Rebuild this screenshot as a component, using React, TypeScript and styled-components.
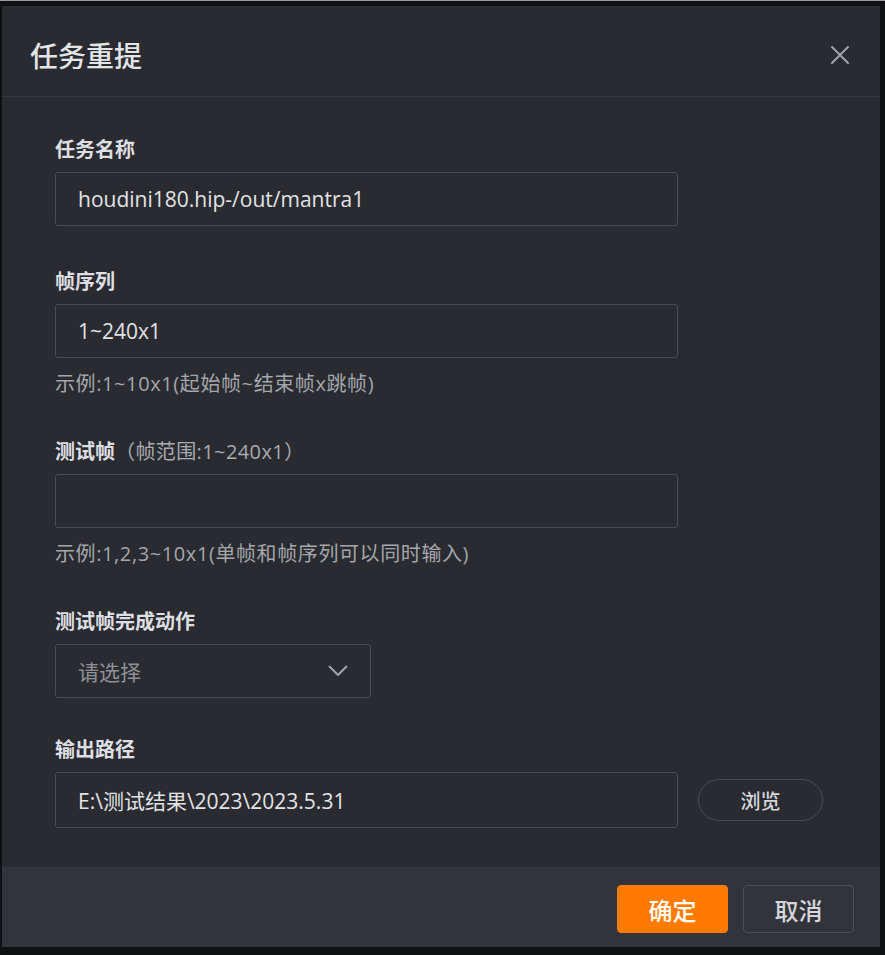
import React from 'react';
import styled, { createGlobalStyle } from 'styled-components';

const GlobalStyle = createGlobalStyle`
  html, body {
    margin: 0;
    padding: 0;
    background: #0f1012;
  }
  body {
    font-family: "Open Sans", "Noto Sans CJK SC", "Liberation Sans", sans-serif;
  }
`;

const Page = styled.div`
  width: 885px;
  height: 955px;
  box-sizing: border-box;
  border-top: 1px solid #9a9a9e;
  padding: 5px 5px 8px 2px;
  background: #0f1012;
`;

const Dialog = styled.div`
  height: 100%;
  display: flex;
  flex-direction: column;
  background: #2a2b31;
  color: #dcdde0;
`;

const Header = styled.div`
  height: 91px;
  box-sizing: border-box;
  display: flex;
  align-items: center;
  justify-content: space-between;
  padding: 8px 28px 0 28px;
  border-bottom: 1px solid #37383e;
`;

const Title = styled.h1`
  margin: 0;
  font-size: 28px;
  font-weight: 500;
  color: #e4e5e8;
`;

const CloseButton = styled.button`
  width: 24px;
  height: 24px;
  padding: 0;
  border: none;
  background: none;
  display: flex;
  align-items: center;
  justify-content: center;
  color: #a2a4ab;
  cursor: pointer;
`;

const Body = styled.div`
  flex: 1;
  padding: 41px 26px 0 53px;
  display: flex;
  flex-direction: column;
  gap: 44px;
`;

const Field = styled.div<{ $pullUp?: number }>`
  display: flex;
  flex-direction: column;
  margin-top: ${p => (p.$pullUp ? -p.$pullUp : 0)}px;
`;

const Label = styled.div`
  font-size: 20px;
  line-height: 24px;
  font-weight: 600;
  color: #dedfe2;
  margin-bottom: 10px;
`;

const LabelNote = styled.span`
  font-weight: 400;
  color: #a9abb1;
  letter-spacing: 0.4px;
`;

const Row = styled.div`
  display: flex;
  align-items: center;
  gap: 20px;
`;

const Input = styled.div<{ $width?: number; $height?: number; $placeholder?: boolean }>`
  width: ${p => p.$width ?? 623}px;
  height: ${p => p.$height ?? 54}px;
  box-sizing: border-box;
  border: 1px solid #4a4b51;
  border-radius: 3px;
  padding: 0 22px;
  display: flex;
  align-items: center;
  justify-content: space-between;
  font-size: 21px;
  color: ${p => (p.$placeholder ? '#8f9197' : '#e2e3e6')};
`;

const Hint = styled.div`
  margin-top: 14px;
  font-size: 20px;
  line-height: 24px;
  letter-spacing: 0.6px;
  color: #a4a6ac;
`;

const BrowseButton = styled.button`
  width: 125px;
  height: 42px;
  border: 1px solid #4a4b51;
  border-radius: 21px;
  background: transparent;
  color: #d6d7db;
  font-family: inherit;
  font-size: 20px;
  font-weight: 500;
`;

const Footer = styled.div`
  height: 80px;
  box-sizing: border-box;
  background: #33343b;
  display: flex;
  align-items: center;
  justify-content: flex-end;
  gap: 15px;
  padding: 4px 26px 0 0;
`;

const FooterButton = styled.button<{ $primary?: boolean }>`
  width: 111px;
  height: 48px;
  border-radius: 4px;
  border: 1px solid ${p => (p.$primary ? '#ff7a00' : '#4d4e55')};
  background: ${p => (p.$primary ? '#ff7a00' : 'transparent')};
  color: ${p => (p.$primary ? '#ffffff' : '#d4d6da')};
  font-family: inherit;
  font-size: 24px;
  font-weight: 500;
`;

const Chevron = () => (
  <svg width="20" height="12" viewBox="0 0 20 12" fill="none">
    <path d="M1.5 1.5 L10 10 L18.5 1.5" stroke="#a2a4ab" strokeWidth="2" strokeLinecap="round" strokeLinejoin="round" />
  </svg>
);

const CloseIcon = () => (
  <svg width="20" height="20" viewBox="0 0 20 20" fill="none">
    <path d="M2 2 L18 18 M18 2 L2 18" stroke="currentColor" strokeWidth="2" strokeLinecap="round" />
  </svg>
);

export default function App() {
  return (
    <>
      <GlobalStyle />
      <Page>
        <Dialog>
          <Header>
            <Title>任务重提</Title>
            <CloseButton aria-label="close">
              <CloseIcon />
            </CloseButton>
          </Header>
          <Body>
            <Field>
              <Label>任务名称</Label>
              <Input>houdini180.hip-/out/mantra1</Input>
            </Field>
            <Field>
              <Label>帧序列</Label>
              <Input>1~240x1</Input>
              <Hint>示例:1~10x1(起始帧~结束帧x跳帧)</Hint>
            </Field>
            <Field>
              <Label>
                测试帧<LabelNote>（帧范围:1~240x1）</LabelNote>
              </Label>
              <Input />
              <Hint>示例:1,2,3~10x1(单帧和帧序列可以同时输入)</Hint>
            </Field>
            <Field>
              <Label>测试帧完成动作</Label>
              <Input $width={316} $placeholder>
                请选择
                <Chevron />
              </Input>
            </Field>
            <Field $pullUp={4}>
              <Label>输出路径</Label>
              <Row>
                <Input $height={56}>E:\测试结果\2023\2023.5.31</Input>
                <BrowseButton>浏览</BrowseButton>
              </Row>
            </Field>
          </Body>
          <Footer>
            <FooterButton $primary>确定</FooterButton>
            <FooterButton>取消</FooterButton>
          </Footer>
        </Dialog>
      </Page>
    </>
  );
}
